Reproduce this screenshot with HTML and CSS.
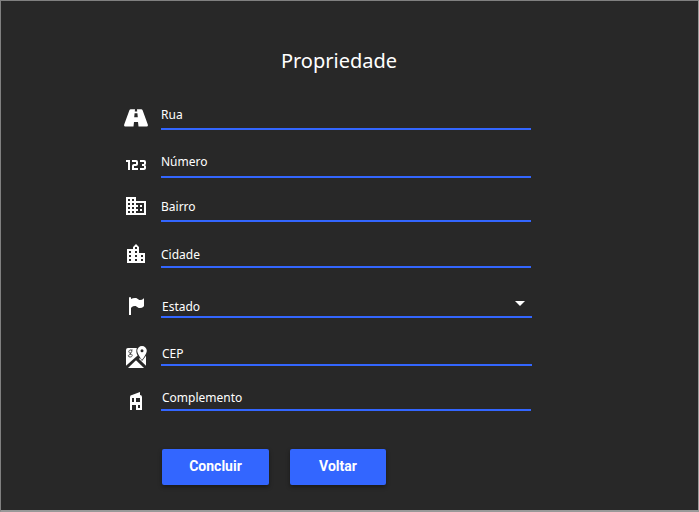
FILE: index.html
```html
<!DOCTYPE html>
<html lang="pt-BR">
<head>
<meta charset="utf-8">
<title>Propriedade</title>
<link rel="stylesheet" href="styles.css">
</head>
<body>
<main class="panel">
<h1 class="title">Propriedade</h1>
<form class="form">
<div class="row row-rua"><svg class="icon" viewBox="0 0 24 24"><path fill-rule="evenodd" d="M6.8 3.3H11L10.8 5.5H13.2L13 3.3H17.2Q18.2 3.3 18.6 4.2L23.8 18.6Q24.3 20.6 22.7 20.6H14.5L14 16H10L9.5 20.6H1.3Q-.3 20.6 .2 18.6L5.4 4.2Q5.8 3.3 6.8 3.3ZM10.6 7.2L10.2 11.2H13.8L13.4 7.2Z"/></svg><label class="field">Rua</label></div>
<div class="row row-numero"><svg class="icon" viewBox="0 0 24 24"><path d="M4,17V9H2V7H6V17H4M22,15C22,16.11 21.1,17 20,17H16V15H20V13H18V11H20V9H16V7H20A2,2 0 0,1 22,9V10.5A1.5,1.5 0 0,1 20.5,12A1.5,1.5 0 0,1 22,13.5V15M14,15V17H8V13C8,11.89 8.9,11 10,11H12V9H8V7H12A2,2 0 0,1 14,9V11C14,12.11 13.1,13 12,13H10V15H14Z"/></svg><label class="field">Número</label></div>
<div class="row row-bairro"><svg class="icon" viewBox="0 0 24 24"><path d="M12 7V3H2v18h20V7H12zM6 19H4v-2h2v2zm0-4H4v-2h2v2zm0-4H4V9h2v2zm0-4H4V5h2v2zm4 12H8v-2h2v2zm0-4H8v-2h2v2zm0-4H8V9h2v2zm0-4H8V5h2v2zm10 12h-8v-2h2v-2h-2v-2h2v-2h-2V9h8v10zm-2-8h-2v2h2v-2zm0 4h-2v2h2v-2z"/></svg><label class="field">Bairro</label></div>
<div class="row row-cidade"><svg class="icon" viewBox="0 0 24 24"><path d="M15 11V5l-3-3-3 3v2H3v14h18V11h-6zm-8 8H5v-2h2v2zm0-4H5v-2h2v2zm0-4H5V9h2v2zm6 8h-2v-2h2v2zm0-4h-2v-2h2v2zm0-4h-2V9h2v2zm0-4h-2V5h2v2zm6 12h-2v-2h2v2zm0-4h-2v-2h2v2z"/></svg><label class="field">Cidade</label></div>
<div class="row row-estado"><svg class="icon" viewBox="0 0 24 24"><path d="M6,3A1,1 0 0,1 7,4V4.88C8.06,4.44 9.5,4 11,4C14,4 14,6 16,6C19,6 20,4 20,4V12C20,12 19,14 16,14C13,14 13,12 11,12C8,12 7,14 7,14V21H5V4A1,1 0 0,1 6,3Z"/></svg><label class="field">Estado<span class="caret"></span></label></div>
<div class="row row-cep"><svg class="icon" viewBox="0 0 24 24"><path d="M4 3H12.8C12 5.8 12.2 8.3 13.6 10.4L2 20.8V5Q2 3 4 3Z"/><path d="M12 15.2L20 23H4Z"/><path d="M18 16L22 10.8V20.8L15 14L16 13Z"/><path fill-rule="evenodd" d="M18 1A4.8 4.8 0 0 0 13.2 5.8C13.2 9 18 15 18 15S22.8 9 22.8 5.8A4.8 4.8 0 0 0 18 1ZM18 4.2A1.5 1.5 0 1 1 18 7.2A1.5 1.5 0 1 1 18 4.2Z"/><path class="map-detail" d="M8.7 5H6.6C4.3 5 4.2 8 6.1 8C8.2 8 8.2 5.4 6.8 5M6 8.1L7.4 9.1C9 10.6 8 12 6 12C3.6 12 3.6 9.5 7 9.3"/></svg><label class="field">CEP</label></div>
<div class="row row-complemento"><svg class="icon" viewBox="0 0 24 24"><path d="M6,21V8A2,2 0 0,1 8,6L16,3V6A2,2 0 0,1 18,8V21H12V16H8V21H6M14,19H16V16H14V19M8,13H10V9H8V13M12,13H16V9H12V13Z"/></svg><label class="field">Complemento</label></div>
<div class="actions"><button class="button button-primary" type="button">Concluir</button><button class="button button-back" type="button">Voltar</button></div>
</form>
</main>
</body>
</html>
```
FILE: styles.css
```css
* { box-sizing: border-box; }
body { margin: 0; background: #282828; }
.panel {
  height: 512px;
  padding-top: 45px;
  border: solid #808080;
  border-width: 1px 1px 2px 1px;
  border-right-color: #999;
  border-bottom-color: #999;
  background: #282828;
  color: #fff;
  font-family: "Noto Sans", sans-serif;
}
.title {
  margin: 0 0 12px;
  padding-right: 21px;
  height: 30px;
  font-size: 20px;
  line-height: 30px;
  font-weight: 400;
  text-align: center;
}
.form { width: 408px; margin-left: 123px; }
.row { display: flex; align-items: flex-end; gap: 13px; }
.icon { width: 24px; height: 24px; flex: none; fill: #fff; }
.map-detail { fill: none; stroke: #282828; stroke-width: .8; }
.field {
  display: flex;
  justify-content: space-between;
  width: 370px;
  border-bottom: 2px solid #36f;
  font-size: 12px;
  line-height: 16px;
}
.row-rua { height: 42px; }
.row-rua .icon { margin-bottom: 0; }
.row-rua .field { padding-bottom: 5px; }
.row-numero { height: 48px; }
.row-numero .icon { margin-bottom: 1px; }
.row-numero .field { padding-bottom: 6px; }
.row-bairro { height: 44px; }
.row-bairro .icon { margin-bottom: 4px; }
.row-bairro .field { padding-bottom: 5px; }
.row-cidade { height: 46px; }
.row-cidade .icon { margin-bottom: 2px; }
.row-cidade .field { padding-bottom: 3px; }
.row-estado { height: 50px; }
.row-estado .field { width: 371px; padding: 0 7px 1px 1px; }
.row-cep { height: 48px; }
.row-cep .icon { margin-bottom: -3px; }
.row-cep .field { width: 371px; padding: 0 0 2px 1px; }
.row-complemento { height: 45px; }
.row-complemento .icon { margin-bottom: -2px; }
.row-complemento .field { padding: 0 0 3px 1px; }
.caret {
  width: 0;
  height: 0;
  margin-top: 2px;
  border: solid transparent;
  border-width: 5px 5px 0;
  border-top-color: #fff;
}
.actions { display: flex; gap: 21px; margin: 38px 0 0 38px; }
.button {
  height: 36px;
  padding: 0 0 2px;
  border: 0;
  border-radius: 2px;
  background: #36f;
  color: #fff;
  font: 700 14px Roboto, sans-serif;
  box-shadow: 0 2px 4px rgba(0, 0, 0, .4);
}
.button-primary { width: 107px; }
.button-back { width: 96px; }
```
